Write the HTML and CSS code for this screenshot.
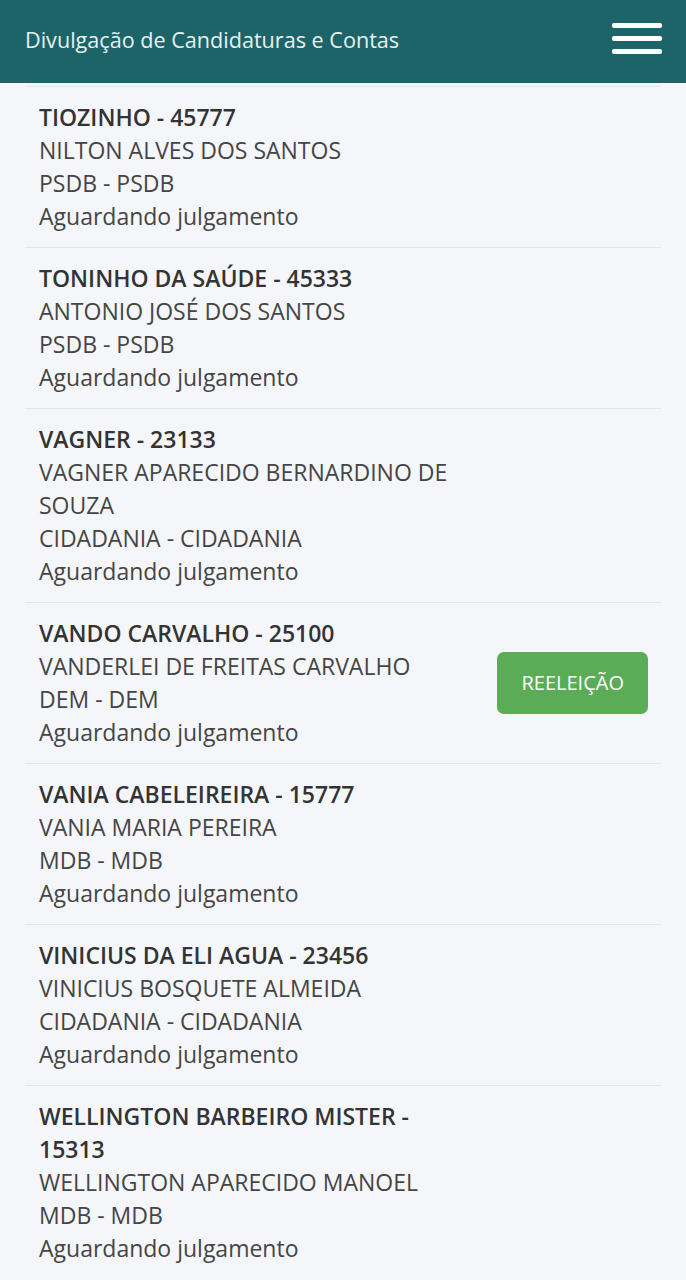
FILE: index.html
```html
<!DOCTYPE html>
<html lang="pt-BR">
<head>
    <meta charset="UTF-8">
    <title>Divulgação de Candidaturas e Contas</title>
    <link rel="stylesheet" href="styles.css">
</head>
<body>
    <header class="topbar">
        <span class="topbar-title">Divulgação de Candidaturas e Contas</span>
        <button class="menu-btn" aria-label="Menu">
            <span></span><span></span><span></span>
        </button>
    </header>

    <ul class="cand-list">
        <li class="cand">
            <div class="cand-info">
                <div class="cand-name">TIOZINHO - 45777</div>
                <div>NILTON ALVES DOS SANTOS</div>
                <div>PSDB - PSDB</div>
                <div>Aguardando julgamento</div>
            </div>
        </li>
        <li class="cand">
            <div class="cand-info">
                <div class="cand-name">TONINHO DA SAÚDE - 45333</div>
                <div>ANTONIO JOSÉ DOS SANTOS</div>
                <div>PSDB - PSDB</div>
                <div>Aguardando julgamento</div>
            </div>
        </li>
        <li class="cand">
            <div class="cand-info">
                <div class="cand-name">VAGNER - 23133</div>
                <div>VAGNER APARECIDO BERNARDINO DE SOUZA</div>
                <div>CIDADANIA - CIDADANIA</div>
                <div>Aguardando julgamento</div>
            </div>
        </li>
        <li class="cand">
            <div class="cand-info">
                <div class="cand-name">VANDO CARVALHO - 25100</div>
                <div>VANDERLEI DE FREITAS CARVALHO</div>
                <div>DEM - DEM</div>
                <div>Aguardando julgamento</div>
            </div>
            <span class="badge">REELEIÇÃO</span>
        </li>
        <li class="cand">
            <div class="cand-info">
                <div class="cand-name">VANIA CABELEIREIRA - 15777</div>
                <div>VANIA MARIA PEREIRA</div>
                <div>MDB - MDB</div>
                <div>Aguardando julgamento</div>
            </div>
        </li>
        <li class="cand">
            <div class="cand-info">
                <div class="cand-name">VINICIUS DA ELI AGUA - 23456</div>
                <div>VINICIUS BOSQUETE ALMEIDA</div>
                <div>CIDADANIA - CIDADANIA</div>
                <div>Aguardando julgamento</div>
            </div>
        </li>
        <li class="cand">
            <div class="cand-info">
                <div class="cand-name">WELLINGTON BARBEIRO MISTER - 15313</div>
                <div>WELLINGTON APARECIDO MANOEL</div>
                <div>MDB - MDB</div>
                <div>Aguardando julgamento</div>
            </div>
        </li>
    </ul>
</body>
</html>
```

FILE: styles.css
```css
body {
    margin: 0;
    font-family: 'Open Sans', sans-serif;
    background-color: #f4f6f9;
    color: #454545;
}

.topbar {
    height: 83px;
    background-color: #1c6468;
    display: flex;
    align-items: center;
    justify-content: space-between;
    padding: 0 24px 0 25px;
    box-sizing: border-box;
}

.topbar-title {
    color: #e8f0f0;
    font-size: 21.6px;
    margin-top: -4px;
}

.menu-btn {
    background: none;
    border: none;
    padding: 0;
    width: 50px;
    display: flex;
    flex-direction: column;
    gap: 8px;
    margin-top: -6px;
}

.menu-btn span {
    display: block;
    height: 5px;
    background-color: #fff;
    border-radius: 2px;
}

.cand-list {
    list-style: none;
    margin: 3px 25px 0;
    padding: 0;
}

.cand {
    display: flex;
    align-items: center;
    border-top: 1px solid #e2e5e9;
    padding: 14px 13px 14px 14px;
    font-size: 23px;
    line-height: 33px;
}

.cand-info {
    width: 425px;
}

.cand-name {
    font-weight: 600;
    color: #333;
}

.badge {
    margin-left: auto;
    background-color: #5aad56;
    color: #fff;
    font-size: 20px;
    padding: 13px 24px;
    border-radius: 7px;
    line-height: 36px;
    height: 36px;
}
```
